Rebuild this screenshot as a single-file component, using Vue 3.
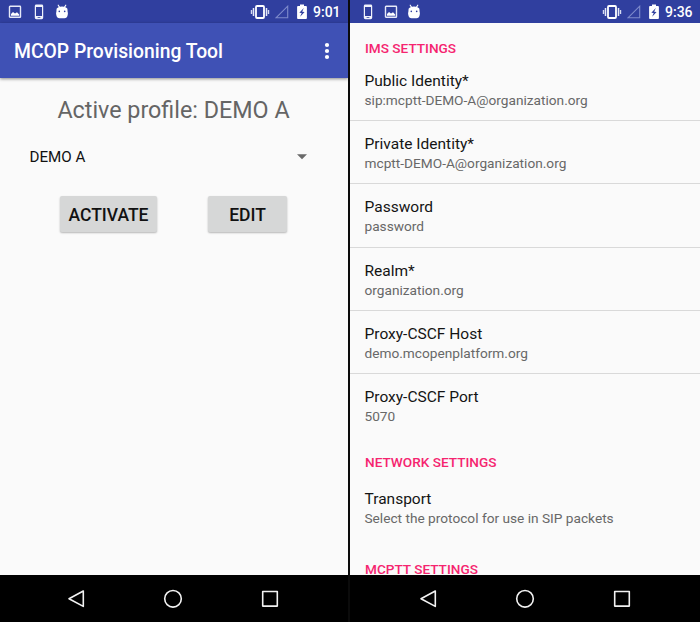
<script setup>
import { h } from 'vue'

const paths = {
  image: () => h('svg', { viewBox: '0 0 14 14', width: 14, height: 14 }, [
    h('rect', { x: 1.5, y: 1.3, width: 11, height: 11, rx: 0.6, fill: 'none', stroke: '#e6e9f8', 'stroke-width': 1.4 }),
    h('path', { d: 'M3 10.7V9l2-2 2 1.6 2-1.4 2.2 2.2v1.3z', fill: '#fff' }),
  ]),
  phone: () => h('svg', { viewBox: '0 0 14 16', width: 14, height: 16 }, [
    h('path', { 'fill-rule': 'evenodd', fill: '#f0f2fb', d: 'M4.3.6h5.4Q11.2.6 11.2 2v11.8q0 1.4-1.5 1.4H4.3q-1.5 0-1.5-1.4V2Q2.8.6 4.3.6zM4 3v9h6V3zM5.6 13.2v.8h2.8v-.8z' }),
  ]),
  droid: () => h('svg', { viewBox: '0 0 14 16', width: 14, height: 16 }, [
    h('path', { d: 'M3.2 1.2l1.6 2.4M10.800 1.2L9.2 3.6', stroke: '#fff', 'stroke-width': 1.1, 'stroke-linecap': 'round' }),
    h('path', { d: 'M1.6 4.700Q2 3.900 3.500 3.200Q5 2.600 7 2.600T10.500 3.200Q12 3.900 12.400 4.700L12.600 7.400Q13.200 9 12.700 11Q12 14.200 9.500 14.300h-5Q2 14.200 1.300 11Q.8 9 1.400 7.400z', fill: '#fff' }),
    h('circle', { cx: 4.3, cy: 7.4, r: 0.8, fill: '#303f9f' }),
    h('circle', { cx: 9.7, cy: 7.4, r: 0.8, fill: '#303f9f' }),
  ]),
}

const phones = [
  { id: 'main', time: '9:01', icons: ['image', 'phone', 'droid'] },
  { id: 'prefs', time: '9:36', icons: ['phone', 'image', 'droid'] },
]

const ims = [
  ['Public Identity*', 'sip:mcptt-DEMO-A@organization.org'],
  ['Private Identity*', 'mcptt-DEMO-A@organization.org'],
  ['Password', 'password'],
  ['Realm*', 'organization.org'],
  ['Proxy-CSCF Host', 'demo.mcopenplatform.org'],
  ['Proxy-CSCF Port', '5070'],
]
</script>

<template>
  <main class="screens">
    <section v-for="p in phones" :key="p.id" class="phone" :class="p.id">
      <header class="status">
        <div class="notifications">
          <component :is="paths[name]" v-for="name in p.icons" :key="name" />
        </div>
        <div class="system">
          <svg class="vibrate" width="20" height="16" viewBox="0 0 20 16">
            <rect x="6" y="2" width="8" height="12" rx="1" fill="none" stroke="#fff" stroke-width="1.800" />
            <path d="M3.500 4v8M16.500 4v8" stroke="#e6e9f8" stroke-width="1.500" />
            <path d="M1.500 6v4M18.500 6v4" stroke="#d5daf2" stroke-width="1.400" />
          </svg>
          <svg class="signal" width="14" height="14" viewBox="0 0 14 14">
            <path d="M12.700 1.200v11.500H1.200z" fill="none" stroke="#7e8acb" stroke-width="1.100" />
          </svg>
          <svg class="battery" width="10" height="16" viewBox="0 0 10 16">
            <path d="M3 .6h4v1.500h2q.9 0 .9.900v11q0 .9-.9.900H1q-.9 0-.9-.9V3q0-.9.900-.9h2z" fill="#fff" />
            <path d="M6.800 4L2.300 8.700l2.400.3-1.600 3.800 4.500-4.700-2.400-.4z" fill="#303f9f" />
          </svg>
          <span class="clock">{{ p.time }}</span>
        </div>
      </header>

      <template v-if="p.id === 'main'">
        <div class="toolbar">
          <h1>MCOP Provisioning Tool</h1>
          <svg width="6" height="18" viewBox="0 0 6 18" fill="#fff">
            <circle cx="3" cy="3" r="2.100" /><circle cx="3" cy="9" r="2.100" /><circle cx="3" cy="15" r="2.100" />
          </svg>
        </div>
        <div class="content">
          <h2>Active profile: DEMO A</h2>
          <div class="spinner">
            <span>DEMO A</span>
            <svg width="10" height="6" viewBox="0 0 10 6"><path d="M0 .3h10L5 5.300z" fill="#696969" /></svg>
          </div>
          <div class="actions">
            <button class="activate">ACTIVATE</button>
            <button class="edit">EDIT</button>
          </div>
        </div>
      </template>

      <div v-else class="content">
        <h3 class="first">IMS SETTINGS</h3>
        <div v-for="[label, value] in ims" :key="label" class="row">
          <div class="label">{{ label }}</div>
          <div class="value">{{ value }}</div>
        </div>
        <h3 class="network">NETWORK SETTINGS</h3>
        <div class="row transport">
          <div class="label">Transport</div>
          <div class="value">Select the protocol for use in SIP packets</div>
        </div>
        <h3 class="mcptt">MCPTT SETTINGS</h3>
      </div>

      <nav class="navbar">
        <svg width="20" height="20" viewBox="0 0 20 20"><path d="M17.300 2v15.400L3 9.700z" /></svg>
        <svg width="20" height="20" viewBox="0 0 20 20"><circle cx="10" cy="9.800" r="8.300" /></svg>
        <svg width="20" height="20" viewBox="0 0 20 20"><rect x="2.700" y="2.500" width="14.600" height="14.600" /></svg>
      </nav>
    </section>
  </main>
</template>

<style>
body { margin: 0; overflow: hidden; background: #000; }
</style>

<style scoped>
.screens {
  display: grid;
  grid-template-columns: 348px 350px;
  column-gap: 2px;
  width: 700px;
  height: 622px;
  background: #0b0b0b;
  font-family: Roboto, "Liberation Sans", sans-serif;
}
.phone {
  display: flex;
  flex-direction: column;
  height: 622px;
  overflow: hidden;
  background: #fafafa;
}
.status {
  flex: none;
  display: flex;
  justify-content: space-between;
  box-sizing: border-box;
  height: 23px;
  padding: 0 7px 0 8px;
  background: #303f9f;
}
.notifications, .system { display: flex; align-items: center; height: 23px; }
.notifications { gap: 9.500px; }
.prefs .notifications { padding-left: 2.500px; gap: 9px; }
.prefs .status { padding-right: 7px; }
.signal { margin-left: 5px; }
.battery { margin-left: 8px; }
.clock { margin-left: 6px; width: 28px; padding-top: 1px; color: #fff; font-size: 14px; font-weight: 500; line-height: 23px; white-space: nowrap; }
.toolbar {
  flex: none;
  display: flex;
  align-items: center;
  justify-content: space-between;
  box-sizing: border-box;
  height: 54.500px;
  padding: 1px 18px 0 14px;
  background: #3f51b5;
  box-shadow: 0 1px 3px rgba(0, 0, 0, .45);
}
h1 { margin: 0; padding-top: 2px; color: #fff; font-size: 19.320px; font-weight: 500; white-space: nowrap; }
.content { flex: 1; min-height: 0; overflow: hidden; }
.main .content { overflow: visible; }
h2 { margin: 17px 0 0; padding-right: 1px; text-align: center; color: #656565; font-size: 23.300px; font-weight: 400; line-height: 30px; }
.spinner { display: flex; align-items: center; justify-content: space-between; margin-top: 20px; padding: 0 41px 0 29.500px; height: 24px; color: #111; font-size: 15.200px; }
.actions { display: flex; padding: 27px 0 0 60px; gap: 51px; }
button {
  height: 36.500px;
  padding: 0;
  border: 0;
  border-radius: 2px;
  background: #d6d7d7;
  box-shadow: 0 1px 2px rgba(0, 0, 0, .28);
  color: #111;
  font: 500 17.500px/38px Roboto, sans-serif;
  white-space: nowrap;
}
.activate { width: 97px; }
.edit { width: 79px; }
h3 { margin: 0; padding-left: 15px; color: #f5246f; font-size: 13.600px; font-weight: 500; line-height: 18px; }
.first { padding-top: 16px; height: 13px; }
.row { box-sizing: border-box; height: 63.200px; padding: 13px 0 0 14.500px; border-bottom: 1px solid #d9d9d9; }
.first + .row { height: 69.300px; padding-top: 19px; }
.row:nth-child(7), .transport { border-bottom: 0; }
.label { color: #141414; font-size: 15.520px; line-height: 20px; }
.value { color: #686868; font-size: 13.680px; line-height: 19px; }
.network { padding-top: 16px; }
.transport { padding-top: 18px; height: 72px; }
.mcptt { padding-top: 17px; }
.navbar {
  flex: none;
  display: flex;
  align-items: center;
  justify-content: center;
  gap: 77px;
  height: 47px;
  padding-right: 1px;
  background: #000;
}
.main .navbar { padding-right: 2px; }
.navbar svg { fill: none; stroke: #f2f2f2; stroke-width: 1.600; stroke-linejoin: round; }
</style>
